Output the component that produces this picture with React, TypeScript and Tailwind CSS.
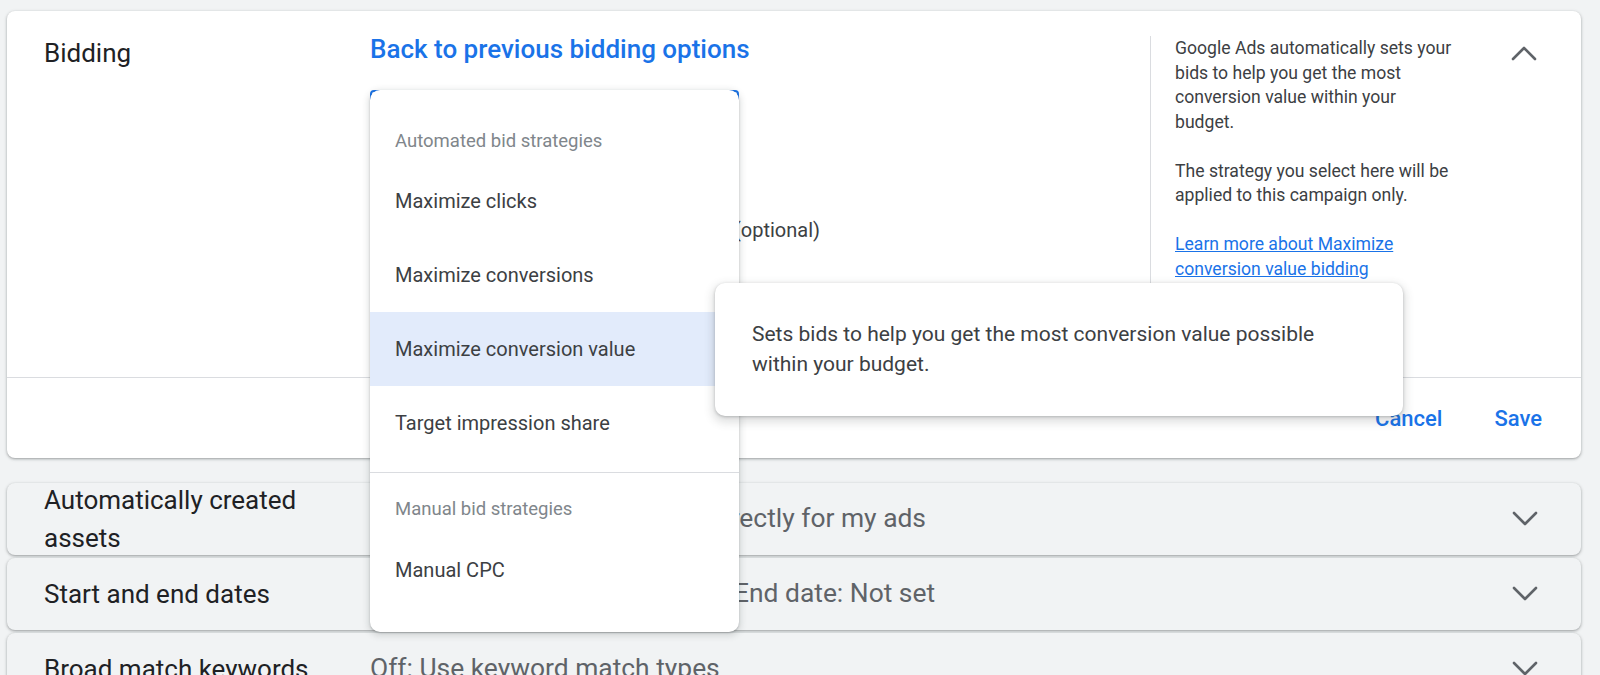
// Bidding settings panel with open strategy menu
const cardShadow = 'shadow-[0_1px_2px_0_rgba(60,64,67,0.3),0_1px_3px_1px_rgba(60,64,67,0.15)]';

function Chevron({ up = false }: { up?: boolean }) {
  return (
    <svg width="26" height="16" viewBox="0 0 26 16" fill="none">
      <polyline
        points={up ? '2,14 13,3 24,14' : '2,2 13,13 24,2'}
        stroke="#5f6368"
        strokeWidth="2.6"
        strokeLinecap="round"
        strokeLinejoin="round"
      />
    </svg>
  );
}

function MenuItem({ label, active = false }: { label: string; active?: boolean }) {
  return (
    <div
      className={
        'flex h-[74px] items-center pl-[25px] text-[20px] text-[#3c4043] ' +
        (active ? 'bg-[#e2ebfb]' : 'bg-white')
      }
    >
      {label}
    </div>
  );
}

function Row({ title, children }: { title: React.ReactNode; children: React.ReactNode }) {
  return (
    <div className={`flex h-[72px] items-center rounded-lg bg-[#f1f3f4] ${cardShadow}`}>
      <div className="w-[363px] shrink-0 pl-[37px] text-[26px] leading-[38px] text-[#202124]">{title}</div>
      <div className="flex-1 whitespace-nowrap text-[26.4px] text-[#5f6368]">{children}</div>
      <div className="pr-[43px]">
        <Chevron />
      </div>
    </div>
  );
}

export default function App() {
  return (
    <div className="relative h-[675px] w-[1600px] overflow-hidden bg-[#f1f3f4] pl-[7px] pr-[19px] pt-[11px] font-['Roboto',Arial,sans-serif]">
      {/* bidding card */}
      <div className={`flex h-[447px] flex-col rounded-lg bg-white ${cardShadow}`}>
        <div className="flex h-[367px] border-b border-[#dadce0]">
          <div className="w-[363px] shrink-0 pl-[37px] pt-[26px] text-[26px] leading-8 text-[#202124]">Bidding</div>
          <div className="w-[780px] shrink-0 pt-[22px]">
            <a className="block text-[26px] font-medium leading-8 text-[#1a73e8]">Back to previous bidding options</a>
            <div className="mt-[25px] h-[56px] w-[369px] rounded-[4px] border-2 border-[#1a73e8]" />
            <div className="mt-[69px] w-[450px] whitespace-nowrap text-right text-[20px] leading-[30px] text-[#3c4043]">
              Set a target return on ad spend (optional)
            </div>
          </div>
          <div className="mt-[25px] flex flex-1 justify-between border-l border-[#dadce0] pl-[24px] pr-[44px]">
            <div className="text-[17.6px] leading-[24.5px] text-[#3c4043]">
              <p>
                Google Ads automatically sets your
                <br />
                bids to help you get the most
                <br />
                conversion value within your
                <br />
                budget.
              </p>
              <p className="mt-[24.5px]">
                The strategy you select here will be
                <br />
                applied to this campaign only.
              </p>
              <p className="mt-[24.5px]">
                <a className="text-[#1a73e8] underline">
                  Learn more about Maximize
                  <br />
                  conversion value bidding
                </a>
              </p>
            </div>
            <div className="mt-[9px]">
              <Chevron up />
            </div>
          </div>
        </div>
        <div className="flex h-[80px] items-center justify-end gap-[52px] pr-[39px] text-[22px] font-medium text-[#1a73e8]">
          <span>Cancel</span>
          <span>Save</span>
        </div>
      </div>

      {/* collapsed sections */}
      <div className="mt-[25px] flex flex-col gap-[3px]">
        <Row
          title={
            <>
              Automatically created
              <br />
              assets
            </>
          }
        >
          <div className="w-[556px] text-right">Text assets: Create assets directly for my ads</div>
        </Row>
        <Row title="Start and end dates">
          <div className="flex">
            <span className="w-[364px]">Start date: March 14, 2024</span>
            <span>End date: Not set</span>
          </div>
        </Row>
        <Row title="Broad match keywords">Off: Use keyword match types</Row>
      </div>

      {/* strategy menu */}
      <div className="absolute left-[370px] top-[90px] h-[542px] w-[369px] rounded-[10px] bg-white pt-[26px] shadow-[0_1px_2px_0_rgba(60,64,67,0.3),0_2px_6px_2px_rgba(60,64,67,0.15)]">
        <div className="flex h-12 items-center pl-[25px] pt-[4px] text-[18.5px] text-[#80868b]">Automated bid strategies</div>
        <MenuItem label="Maximize clicks" />
        <MenuItem label="Maximize conversions" />
        <MenuItem label="Maximize conversion value" active />
        <MenuItem label="Target impression share" />
        <div className="mt-3 border-t border-[#dadce0]" />
        <div className="mt-3 flex h-12 items-center pl-[25px] pt-[2px] text-[18.5px] text-[#80868b]">Manual bid strategies</div>
        <MenuItem label="Manual CPC" />
      </div>

      {/* tooltip */}
      <div className="absolute left-[715px] top-[283px] h-[133px] w-[688px] rounded-[10px] bg-white px-[37px] pt-[36px] text-[21px] leading-[30px] text-[#3c4043] shadow-[0_1px_3px_0_rgba(60,64,67,0.3),0_4px_8px_3px_rgba(60,64,67,0.15)]">
        Sets bids to help you get the most conversion value possible
        <br />
        within your budget.
      </div>
    </div>
  );
}
